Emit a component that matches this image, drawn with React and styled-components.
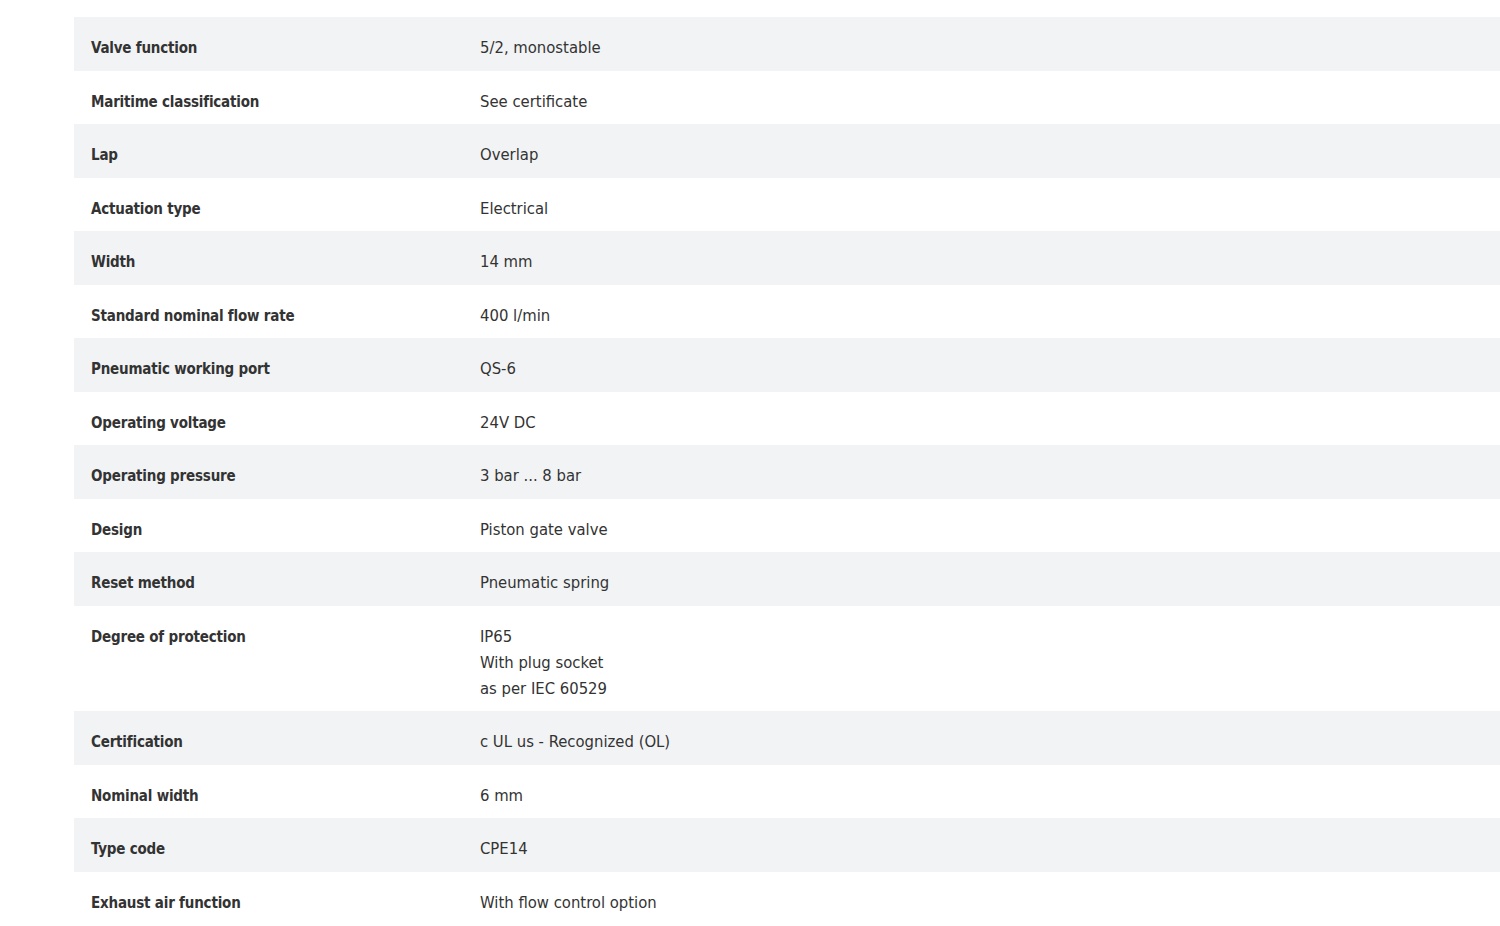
import React from "react";
import styled, { createGlobalStyle } from "styled-components";

const specs = [
  { label: "Valve function", value: ["5/2, monostable"] },
  { label: "Maritime classification", value: ["See certificate"] },
  { label: "Lap", value: ["Overlap"] },
  { label: "Actuation type", value: ["Electrical"] },
  { label: "Width", value: ["14 mm"] },
  { label: "Standard nominal flow rate", value: ["400 l/min"] },
  { label: "Pneumatic working port", value: ["QS-6"] },
  { label: "Operating voltage", value: ["24V DC"] },
  { label: "Operating pressure", value: ["3 bar ... 8 bar"] },
  { label: "Design", value: ["Piston gate valve"] },
  { label: "Reset method", value: ["Pneumatic spring"] },
  {
    label: "Degree of protection",
    value: ["IP65", "With plug socket", "as per IEC 60529"],
  },
  { label: "Certification", value: ["c UL us - Recognized (OL)"] },
  { label: "Nominal width", value: ["6 mm"] },
  { label: "Type code", value: ["CPE14"] },
  { label: "Exhaust air function", value: ["With flow control option"] },
];

function App() {
  return (
    <>
      <GlobalStyle />
      <Page>
        <SpecTable>
          <tbody>
            {specs.map((spec, i) => (
              <SpecRow key={spec.label} shaded={i % 2 === 0}>
                <Label>{spec.label}</Label>
                <Value>
                  {spec.value.map((line) => (
                    <Line key={line}>{line}</Line>
                  ))}
                </Value>
              </SpecRow>
            ))}
          </tbody>
        </SpecTable>
      </Page>
    </>
  );
}

export default App;

const GlobalStyle = createGlobalStyle`
  body {
    margin: 0;
    background: #fff;
    font-family: "DejaVu Sans Condensed", "Liberation Sans", sans-serif;
    color: #333;
  }
`;

const Page = styled.div`
  padding: 17px 0 0 74px;
  height: 926px;
  overflow: hidden;
  box-sizing: border-box;
`;

const SpecTable = styled.table`
  width: 100%;
  border-collapse: collapse;
`;

const SpecRow = styled.tr`
  background: ${(props) => (props.shaded ? "#f2f3f5" : "#fff")};
`;

const Label = styled.td`
  width: 389px;
  padding: 18px 0 9.5px 17px;
  vertical-align: top;
  font-size: 15px;
  font-weight: bold;
  letter-spacing: -0.2px;
  line-height: 26px;
  color: #333;
`;

const Value = styled.td`
  padding: 18px 17px 9.5px 0;
  vertical-align: top;
  font-size: 16.5px;
  line-height: 26px;
  color: #333;
`;

const Line = styled.div``;
